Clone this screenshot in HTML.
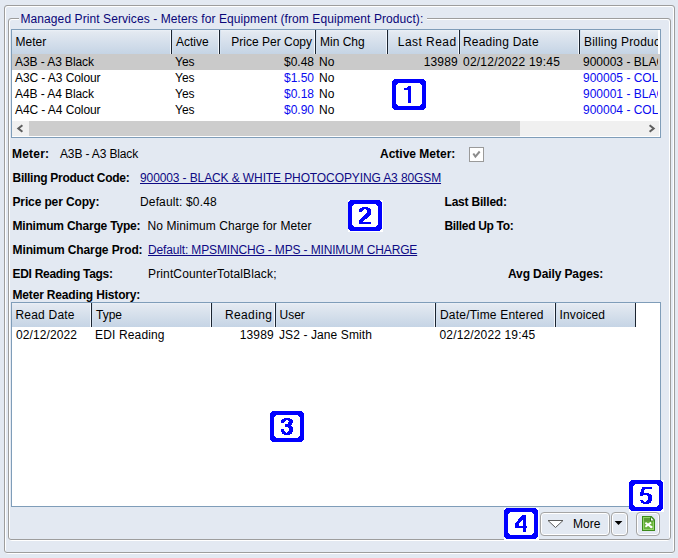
<!DOCTYPE html>
<html><head><meta charset="utf-8"><style>
html,body{margin:0;padding:0;}
body{width:678px;height:558px;overflow:hidden;position:relative;background:#e3e9f2;font-family:"Liberation Sans",sans-serif;font-size:12px;}
.a{position:absolute;box-sizing:content-box;}
.t{position:absolute;white-space:nowrap;line-height:14px;font-size:12px;font-family:"Liberation Sans",sans-serif;color:#000;}
svg{display:block;}
</style></head><body>
<div class="a" style="left:5px;top:6px;width:667px;height:546px;border:1px solid #fff;border-radius:3px;"></div>
<div class="a" style="left:4px;top:5px;width:669px;height:546px;border:1px solid #9d9d9d;border-radius:3px;"></div>
<div class="a" style="left:9px;top:19px;width:659px;height:520px;border:1px solid #fff;border-radius:3px;"></div>
<div class="a" style="left:8px;top:18px;width:661px;height:520px;border:1px solid #9d9d9d;border-radius:3px;"></div>
<div class="a" style="left:19px;top:14px;width:408px;height:8px;background:#e3e9f2;"></div>
<div class="t" style="left:20.5px;top:12px;color:#0a0678;letter-spacing:0.085px;">Managed Print Services - Meters for Equipment (from Equipment Product):</div>
<div class="a" style="left:11px;top:29px;width:648px;height:107px;border:1px solid #7f9db9;background:#fff;"></div>
<div class="a" style="left:12px;top:30px;width:647px;height:24px;background:linear-gradient(#ebf0f7 0px,#e3e9f1 2px,#c5d4e5 100%);"></div>
<div class="a" style="left:658px;top:30px;width:2px;height:24px;background:#fff;"></div>
<div class="a" style="left:170px;top:30px;width:1px;height:24px;background:#f3f7fd;"></div>
<div class="a" style="left:171px;top:30px;width:1px;height:24px;background:#1b2430;"></div>
<div class="a" style="left:172px;top:30px;width:1px;height:24px;background:#d2e0ef;"></div>
<div class="a" style="left:218px;top:30px;width:1px;height:24px;background:#f3f7fd;"></div>
<div class="a" style="left:219px;top:30px;width:1px;height:24px;background:#1b2430;"></div>
<div class="a" style="left:220px;top:30px;width:1px;height:24px;background:#d2e0ef;"></div>
<div class="a" style="left:314px;top:30px;width:1px;height:24px;background:#f3f7fd;"></div>
<div class="a" style="left:315px;top:30px;width:1px;height:24px;background:#1b2430;"></div>
<div class="a" style="left:316px;top:30px;width:1px;height:24px;background:#d2e0ef;"></div>
<div class="a" style="left:386px;top:30px;width:1px;height:24px;background:#f3f7fd;"></div>
<div class="a" style="left:387px;top:30px;width:1px;height:24px;background:#1b2430;"></div>
<div class="a" style="left:388px;top:30px;width:1px;height:24px;background:#d2e0ef;"></div>
<div class="a" style="left:458px;top:30px;width:1px;height:24px;background:#f3f7fd;"></div>
<div class="a" style="left:459px;top:30px;width:1px;height:24px;background:#1b2430;"></div>
<div class="a" style="left:460px;top:30px;width:1px;height:24px;background:#d2e0ef;"></div>
<div class="a" style="left:578px;top:30px;width:1px;height:24px;background:#f3f7fd;"></div>
<div class="a" style="left:579px;top:30px;width:1px;height:24px;background:#1b2430;"></div>
<div class="a" style="left:580px;top:30px;width:1px;height:24px;background:#d2e0ef;"></div>
<div class="t" style="left:15.5px;top:35px;">Meter</div>
<div class="t" style="left:176px;top:35px;">Active</div>
<div class="t" style="right:366px;top:35px;text-align:right;">Price Per Copy</div>
<div class="t" style="left:320px;top:35px;">Min Chg</div>
<div class="t" style="right:221.39999999999998px;top:35px;text-align:right;letter-spacing:0.45px;">Last Read</div>
<div class="t" style="left:463px;top:35px;letter-spacing:0.2px;">Reading Date</div>
<div class="a" style="left:580px;top:30px;width:78px;height:24px;overflow:hidden"><div class="t" style="left:4px;top:5px;letter-spacing:0.2px">Billing Product Code</div></div>
<div class="a" style="left:12px;top:54px;width:648px;height:16px;background:#cacaca;"></div>
<div class="t" style="left:15px;top:55px;letter-spacing:-0.08px;">A3B - A3 Black</div>
<div class="t" style="left:175px;top:55px;">Yes</div>
<div class="t" style="right:364px;top:55px;text-align:right;">$0.48</div>
<div class="t" style="left:319px;top:55px;">No</div>
<div class="t" style="right:220px;top:55px;text-align:right;letter-spacing:0.2px;">13989</div>
<div class="t" style="left:463px;top:55px;letter-spacing:0.23px;">02/12/2022 19:45</div>
<div class="a" style="left:580px;top:54px;width:78px;height:16px;overflow:hidden"><div class="t" style="left:3px;top:1px;color:#000">900003 - BLACK & WHITE</div></div>
<div class="t" style="left:15px;top:71px;letter-spacing:-0.08px;">A3C - A3 Colour</div>
<div class="t" style="left:175px;top:71px;">Yes</div>
<div class="t" style="right:364px;top:71px;text-align:right;color:#0a0af0;">$1.50</div>
<div class="t" style="left:319px;top:71px;">No</div>
<div class="a" style="left:580px;top:70px;width:78px;height:16px;overflow:hidden"><div class="t" style="left:3px;top:1px;color:#0a0af0">900005 - COLOUR</div></div>
<div class="t" style="left:15px;top:87px;letter-spacing:-0.08px;">A4B - A4 Black</div>
<div class="t" style="left:175px;top:87px;">Yes</div>
<div class="t" style="right:364px;top:87px;text-align:right;color:#0a0af0;">$0.18</div>
<div class="t" style="left:319px;top:87px;">No</div>
<div class="a" style="left:580px;top:86px;width:78px;height:16px;overflow:hidden"><div class="t" style="left:3px;top:1px;color:#0a0af0">900001 - BLACK & WHITE</div></div>
<div class="t" style="left:15px;top:103px;letter-spacing:-0.08px;">A4C - A4 Colour</div>
<div class="t" style="left:175px;top:103px;">Yes</div>
<div class="t" style="right:364px;top:103px;text-align:right;color:#0a0af0;">$0.90</div>
<div class="t" style="left:319px;top:103px;">No</div>
<div class="a" style="left:580px;top:102px;width:78px;height:16px;overflow:hidden"><div class="t" style="left:3px;top:1px;color:#0a0af0">900004 - COLOUR</div></div>
<div class="a" style="left:12px;top:121px;width:647px;height:15px;background:#f0f0f0;"></div>
<div class="a" style="left:29px;top:121px;width:491px;height:15px;background:#cdcdcd;"></div>
<svg class="a" style="left:12px;top:121px" width="17" height="15"><path d="M10.4 4.2 L6.3 7.5 L10.4 10.8" fill="none" stroke="#5e5e5e" stroke-width="2"/></svg>
<svg class="a" style="left:642px;top:121px" width="17" height="15"><path d="M7.6 4.2 L11.7 7.5 L7.6 10.8" fill="none" stroke="#5e5e5e" stroke-width="2"/></svg>
<div class="t" style="left:12px;top:147px;font-weight:bold;letter-spacing:0.2px;">Meter:</div>
<div class="t" style="left:60px;top:147px;letter-spacing:-0.14px;">A3B - A3 Black</div>
<div class="t" style="left:380px;top:147px;font-weight:bold;">Active Meter:</div>
<svg class="a" style="left:469px;top:147px" width="15" height="15"><rect x="0.5" y="0.5" width="14" height="14" fill="#fff" stroke="#9a9a9a"/><path d="M4.3 6.5 L6.4 9.6 L10.7 4.5" fill="none" stroke="#8c8c8c" stroke-width="2"/></svg>
<div class="t" style="left:12.5px;top:171px;font-weight:bold;letter-spacing:-0.27px;">Billing Product Code:</div>
<div class="t" style="left:140px;top:171px;color:#0e0a84;letter-spacing:-0.11px;text-decoration:underline;">900003 - BLACK &amp; WHITE PHOTOCOPYING A3 80GSM</div>
<div class="t" style="left:12.5px;top:195px;font-weight:bold;letter-spacing:-0.13px;">Price per Copy:</div>
<div class="t" style="left:140px;top:195px;letter-spacing:0.15px;">Default: $0.48</div>
<div class="t" style="left:444.5px;top:195px;font-weight:bold;letter-spacing:-0.2px;">Last Billed:</div>
<div class="t" style="left:12.5px;top:219px;font-weight:bold;letter-spacing:-0.2px;">Minimum Charge Type:</div>
<div class="t" style="left:147.5px;top:219px;letter-spacing:0.1px;">No Minimum Charge for Meter</div>
<div class="t" style="left:444.5px;top:219px;font-weight:bold;letter-spacing:-0.33px;">Billed Up To:</div>
<div class="t" style="left:12.5px;top:243px;font-weight:bold;letter-spacing:-0.1px;">Minimum Charge Prod:</div>
<div class="t" style="left:148px;top:243px;color:#0e0a84;letter-spacing:-0.15px;text-decoration:underline;">Default: MPSMINCHG - MPS - MINIMUM CHARGE</div>
<div class="t" style="left:12.5px;top:267px;font-weight:bold;letter-spacing:-0.29px;">EDI Reading Tags:</div>
<div class="t" style="left:148px;top:267px;letter-spacing:0.14px;">PrintCounterTotalBlack;</div>
<div class="t" style="left:508px;top:267px;font-weight:bold;letter-spacing:-0.11px;">Avg Daily Pages:</div>
<div class="t" style="left:12.5px;top:288px;font-weight:bold;letter-spacing:-0.17px;">Meter Reading History:</div>
<div class="a" style="left:11px;top:302px;width:648px;height:203px;border:1px solid #7f9db9;background:#fff;"></div>
<div class="a" style="left:12px;top:303px;width:624px;height:24px;background:linear-gradient(#ebf0f7 0px,#e3e9f1 2px,#c5d4e5 100%);"></div>
<div class="a" style="left:90px;top:303px;width:1px;height:24px;background:#f3f7fd;"></div>
<div class="a" style="left:91px;top:303px;width:1px;height:24px;background:#1b2430;"></div>
<div class="a" style="left:92px;top:303px;width:1px;height:24px;background:#d2e0ef;"></div>
<div class="a" style="left:210px;top:303px;width:1px;height:24px;background:#f3f7fd;"></div>
<div class="a" style="left:211px;top:303px;width:1px;height:24px;background:#1b2430;"></div>
<div class="a" style="left:212px;top:303px;width:1px;height:24px;background:#d2e0ef;"></div>
<div class="a" style="left:274px;top:303px;width:1px;height:24px;background:#f3f7fd;"></div>
<div class="a" style="left:275px;top:303px;width:1px;height:24px;background:#1b2430;"></div>
<div class="a" style="left:276px;top:303px;width:1px;height:24px;background:#d2e0ef;"></div>
<div class="a" style="left:434px;top:303px;width:1px;height:24px;background:#f3f7fd;"></div>
<div class="a" style="left:435px;top:303px;width:1px;height:24px;background:#1b2430;"></div>
<div class="a" style="left:436px;top:303px;width:1px;height:24px;background:#d2e0ef;"></div>
<div class="a" style="left:554px;top:303px;width:1px;height:24px;background:#f3f7fd;"></div>
<div class="a" style="left:555px;top:303px;width:1px;height:24px;background:#1b2430;"></div>
<div class="a" style="left:556px;top:303px;width:1px;height:24px;background:#d2e0ef;"></div>
<div class="a" style="left:635px;top:303px;width:1px;height:24px;background:#1b2430;"></div>
<div class="t" style="left:15.5px;top:308px;letter-spacing:0.2px;">Read Date</div>
<div class="t" style="left:96px;top:308px;">Type</div>
<div class="t" style="right:405.6px;top:308px;text-align:right;letter-spacing:0.4px;">Reading</div>
<div class="t" style="left:279.5px;top:308px;">User</div>
<div class="t" style="left:440px;top:308px;letter-spacing:0.2px;">Date/Time Entered</div>
<div class="t" style="left:559.6px;top:308px;letter-spacing:0.1px;">Invoiced</div>
<div class="t" style="left:16px;top:328px;letter-spacing:0.1px;">02/12/2022</div>
<div class="t" style="left:95px;top:328px;letter-spacing:0.15px;">EDI Reading</div>
<div class="t" style="right:404px;top:328px;text-align:right;letter-spacing:0.2px;">13989</div>
<div class="t" style="left:279px;top:328px;letter-spacing:0.1px;">JS2 - Jane Smith</div>
<div class="t" style="left:439.5px;top:328px;letter-spacing:0.15px;">02/12/2022 19:45</div>
<div class="a" style="left:541px;top:513px;width:66px;height:20px;border:1px solid #fff;border-radius:3px;"></div>
<div class="a" style="left:540px;top:512px;width:68px;height:22px;border:1px solid #a5a5a5;border-radius:4px;"></div>
<svg class="a" style="left:546px;top:518px" width="20" height="12"><path d="M2 2.5 L17 2.5 L9.5 9.5 Z" fill="#fff" stroke="#5a5a5a" stroke-width="1"/></svg>
<div class="t" style="left:573px;top:517px;">More</div>
<div class="a" style="left:612px;top:513px;width:13px;height:20px;border:1px solid #fff;border-radius:3px;"></div>
<div class="a" style="left:611px;top:512px;width:15px;height:22px;border:1px solid #a5a5a5;border-radius:4px;"></div>
<svg class="a" style="left:614px;top:520px" width="10" height="7"><path d="M0.6 1 L8.4 1 L4.5 4.9 Z" fill="#000"/></svg>
<div class="a" style="left:637px;top:513px;width:20px;height:20px;border:1px solid #fff;border-radius:3px;"></div>
<div class="a" style="left:636px;top:512px;width:22px;height:22px;border:1px solid #a5a5a5;border-radius:4px;"></div>
<svg class="a" style="left:642px;top:516px" width="14" height="15">
<path d="M0 0 H9.6 L13 3.4 V15 H0 Z" fill="#3c8a1c"/>
<path d="M1 1 H9.2 L12 3.8 V14 H1 Z" fill="#92d468"/>
<path d="M2 2 H8.8 L11 4.2 V13 H2 Z" fill="#68b23c"/>
<rect x="2" y="2" width="6.5" height="3.5" fill="#5c9c34"/>
<path d="M8 1.5 V5.2 H12.2 V4 L9.2 1 Z" fill="#2f7a14"/>
<path d="M9 1.6 L11.8 4.4 H9 Z" fill="#fff"/>
<path d="M3.4 6.7 L9.2 10.9 M9.1 6.5 L3.4 10.8" stroke="#fff" stroke-width="1.9" fill="none"/>
<circle cx="9.3" cy="11" r="1.2" fill="#fff"/>
</svg>
<svg class="a" style="left:0;top:0" width="678" height="558" shape-rendering="crispEdges"><rect x="392" y="79" width="35" height="32" fill="#fff"/><path d="M392 81h34v27h-34zM393 80h32v1h-32zM393 108h32v1h-32zM394 79h30v1h-30zM394 109h30v1h-30z" fill="#0000ff"/><path d="M396 85h26v19h-26zM397 84h24v1h-24zM397 104h24v1h-24zM398 83h22v1h-22zM398 105h22v1h-22z" fill="#fff"/></svg>
<svg class="a" style="left:0;top:0" width="678" height="558"><path d="M408 86h3v1h-3zM407 87h4v1h-4zM404 88h7v1h-7zM404 89h7v1h-7zM408 90h3v1h-3zM408 91h3v1h-3zM408 92h3v1h-3zM408 93h3v1h-3zM408 94h3v1h-3zM408 95h3v1h-3zM408 96h3v1h-3zM408 97h3v1h-3zM408 98h3v1h-3zM408 99h3v1h-3zM408 100h3v1h-3zM408 101h3v1h-3zM408 102h3v1h-3z" fill="#0000ff" shape-rendering="crispEdges"/></svg>
<svg class="a" style="left:0;top:0" width="678" height="558" shape-rendering="crispEdges"><rect x="348" y="200" width="35" height="32" fill="#fff"/><path d="M348 202h34v27h-34zM349 201h32v1h-32zM349 229h32v1h-32zM350 200h30v1h-30zM350 230h30v1h-30z" fill="#0000ff"/><path d="M352 206h26v19h-26zM353 205h24v1h-24zM353 225h24v1h-24zM354 204h22v1h-22zM354 226h22v1h-22z" fill="#fff"/></svg>
<svg class="a" style="left:0;top:0" width="678" height="558"><path d="M362 207h6v1h-6zM360 208h10v1h-10zM359 209h5v1h-5zM366 209h5v1h-5zM359 210h4v1h-4zM367 210h4v1h-4zM359 211h3v1h-3zM367 211h4v1h-4zM367 212h4v1h-4zM366 213h5v1h-5zM365 214h6v1h-6zM364 215h6v1h-6zM363 216h6v1h-6zM362 217h6v1h-6zM361 218h6v1h-6zM360 219h5v1h-5zM359 220h5v1h-5zM359 221h4v1h-4zM359 222h12v1h-12zM359 223h12v1h-12z" fill="#0000ff" shape-rendering="crispEdges"/></svg>
<svg class="a" style="left:0;top:0" width="678" height="558" shape-rendering="crispEdges"><rect x="270" y="411" width="35" height="32" fill="#fff"/><path d="M270 413h34v27h-34zM271 412h32v1h-32zM271 440h32v1h-32zM272 411h30v1h-30zM272 441h30v1h-30z" fill="#0000ff"/><path d="M274 417h26v19h-26zM275 416h24v1h-24zM275 436h24v1h-24zM276 415h22v1h-22zM276 437h22v1h-22z" fill="#fff"/></svg>
<svg class="a" style="left:0;top:0" width="678" height="558"><path d="M284 418h6v1h-6zM282 419h10v1h-10zM281 420h5v1h-5zM288 420h5v1h-5zM281 421h4v1h-4zM289 421h4v1h-4zM281 422h3v1h-3zM288 422h5v1h-5zM288 423h4v1h-4zM285 424h7v1h-7zM285 425h6v1h-6zM285 426h7v1h-7zM288 427h5v1h-5zM289 428h4v1h-4zM281 429h3v1h-3zM289 429h4v1h-4zM281 430h3v1h-3zM289 430h4v1h-4zM281 431h4v1h-4zM288 431h5v1h-5zM282 432h4v1h-4zM287 432h5v1h-5zM282 433h10v1h-10zM284 434h6v1h-6z" fill="#0000ff" shape-rendering="crispEdges"/></svg>
<svg class="a" style="left:0;top:0" width="678" height="558" shape-rendering="crispEdges"><rect x="504" y="508" width="35" height="32" fill="#fff"/><path d="M504 510h34v27h-34zM505 509h32v1h-32zM505 537h32v1h-32zM506 508h30v1h-30zM506 538h30v1h-30z" fill="#0000ff"/><path d="M508 514h26v19h-26zM509 513h24v1h-24zM509 533h24v1h-24zM510 512h22v1h-22zM510 534h22v1h-22z" fill="#fff"/></svg>
<svg class="a" style="left:0;top:0" width="678" height="558"><path d="M522 515h4v1h-4zM521 516h5v1h-5zM520 517h6v1h-6zM519 518h7v1h-7zM518 519h8v1h-8zM518 520h4v1h-4zM523 520h3v1h-3zM517 521h4v1h-4zM523 521h3v1h-3zM516 522h4v1h-4zM523 522h3v1h-3zM515 523h4v1h-4zM523 523h3v1h-3zM515 524h4v1h-4zM523 524h3v1h-3zM515 525h4v1h-4zM523 525h3v1h-3zM515 526h12v1h-12zM515 527h12v1h-12zM523 528h3v1h-3zM523 529h3v1h-3zM523 530h3v1h-3zM523 531h3v1h-3z" fill="#0000ff" shape-rendering="crispEdges"/></svg>
<svg class="a" style="left:0;top:0" width="678" height="558" shape-rendering="crispEdges"><rect x="629" y="480" width="35" height="32" fill="#fff"/><path d="M629 482h34v27h-34zM630 481h32v1h-32zM630 509h32v1h-32zM631 480h30v1h-30zM631 510h30v1h-30z" fill="#0000ff"/><path d="M633 486h26v19h-26zM634 485h24v1h-24zM634 505h24v1h-24zM635 484h22v1h-22zM635 506h22v1h-22z" fill="#fff"/></svg>
<svg class="a" style="left:0;top:0" width="678" height="558"><path d="M642 487h10v1h-10zM642 488h10v1h-10zM641 489h4v1h-4zM641 490h3v1h-3zM641 491h3v1h-3zM640 492h4v1h-4zM640 493h9v1h-9zM640 494h11v1h-11zM640 495h3v1h-3zM647 495h5v1h-5zM648 496h4v1h-4zM648 497h4v1h-4zM648 498h4v1h-4zM648 499h4v1h-4zM640 500h3v1h-3zM647 500h5v1h-5zM641 501h3v1h-3zM646 501h5v1h-5zM641 502h10v1h-10zM643 503h6v1h-6z" fill="#0000ff" shape-rendering="crispEdges"/></svg>
</body></html>
